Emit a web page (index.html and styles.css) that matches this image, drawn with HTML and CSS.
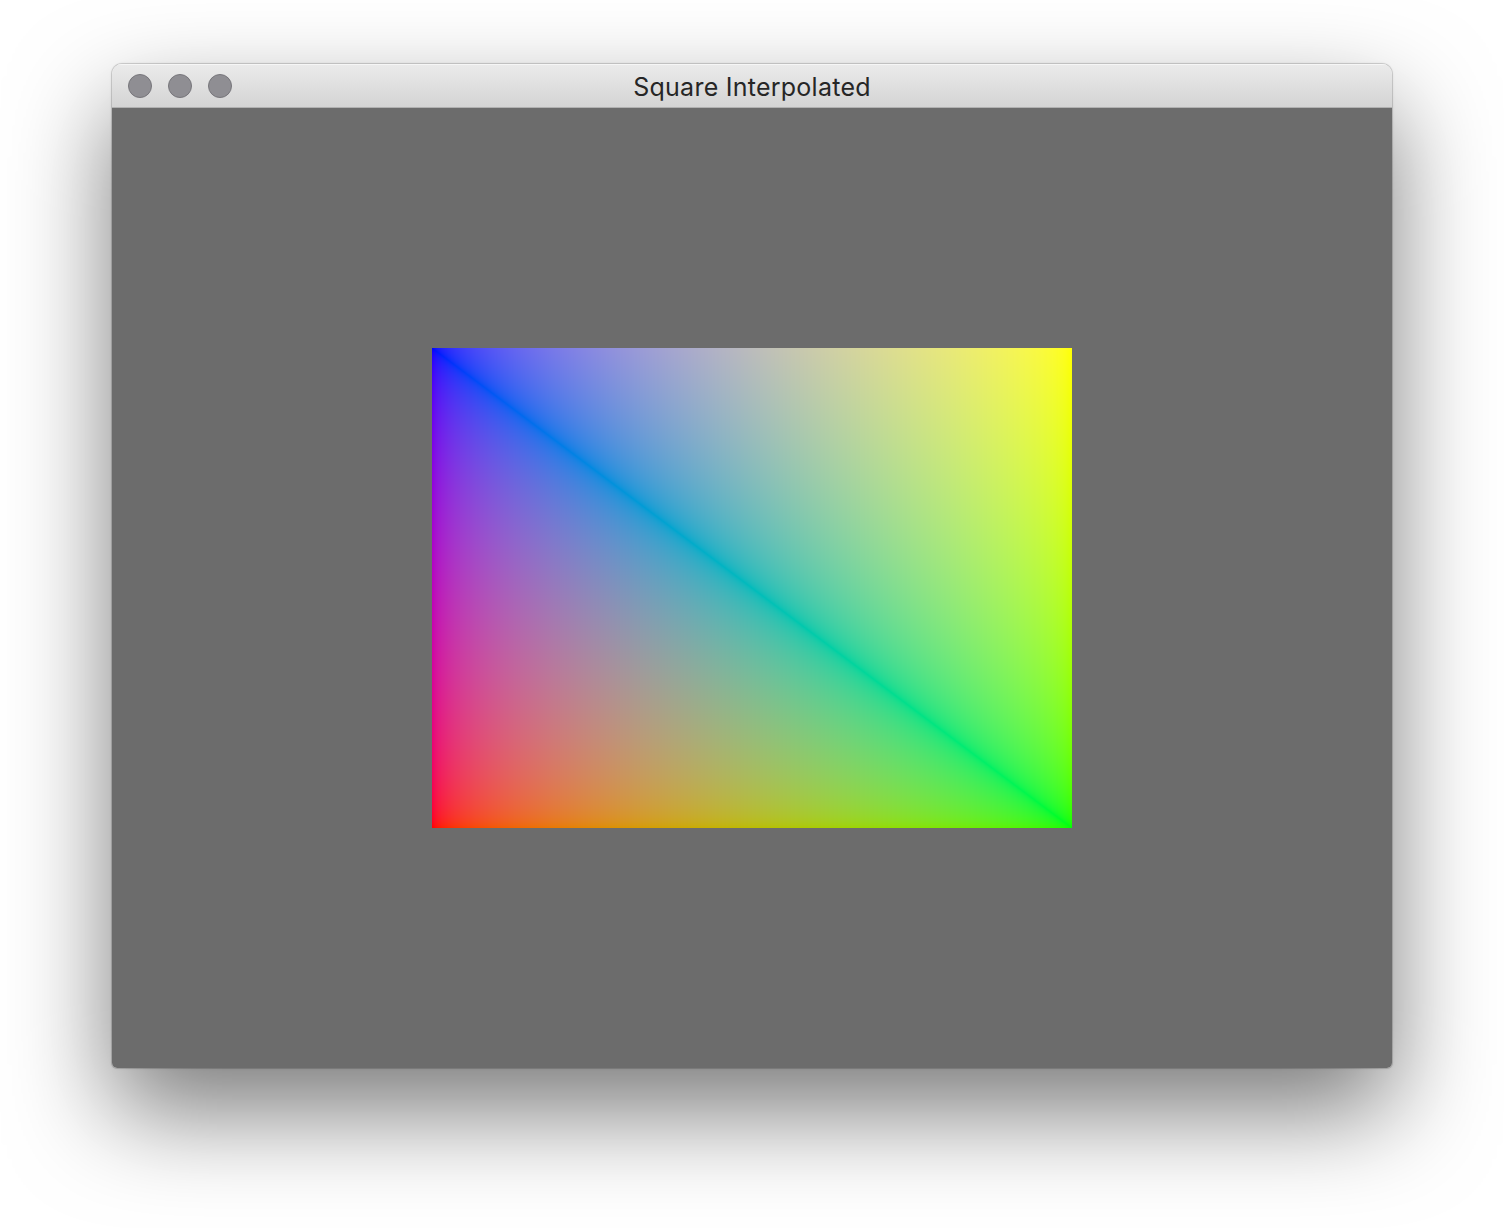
FILE: index.html
```html
<!DOCTYPE html>
<html>
<head>
<meta charset="utf-8">
<title>Square Interpolated</title>
<link rel="stylesheet" href="styles.css">
</head>
<body>
  <div class="window">
    <div class="titlebar">
      <div class="lights">
        <span class="light"></span>
        <span class="light"></span>
        <span class="light"></span>
      </div>
      <div class="title">Square Interpolated</div>
    </div>
    <div class="content">
      <canvas id="view" class="view" width="640" height="480"></canvas>
    </div>
  </div>
  <script src="script.js"></script>
</body>
</html>
```

FILE: styles.css
```css
html, body {
  margin: 0;
  padding: 0;
  background: #ffffff;
}
body {
  width: 1504px;
  height: 1228px;
  overflow: hidden;
  display: flex;
  flex-direction: column;
  align-items: center;
  padding-top: 64px;
  box-sizing: border-box;
  font-family: Inter, "Noto Sans", "Liberation Sans", sans-serif;
}
.window {
  width: 1280px;
  border-radius: 10px 10px 5px 5px;
  overflow: hidden;
  box-shadow: 0 44px 100px rgba(0, 0, 0, 0.52), 0 0 0 1px rgba(0, 0, 0, 0.12), 0 0 3px rgba(0, 0, 0, 0.15);
  display: flex;
  flex-direction: column;
}
.titlebar {
  height: 43px;
  position: relative;
  background: linear-gradient(#ebebeb, #d4d4d4);
  border-bottom: 1px solid #b1b1b1;
  box-shadow: inset 0 1px 0 #f6f6f6;
  display: flex;
  align-items: center;
  justify-content: center;
}
.lights {
  position: absolute;
  left: 16px;
  top: 10px;
  display: flex;
  gap: 16px;
}
.light {
  width: 22px;
  height: 22px;
  border-radius: 50%;
  background: #8f8e93;
  border: 1px solid #77767b;
}
.title {
  font-size: 25px;
  color: #262626;
  letter-spacing: 0.25px;
  padding-top: 2px;
}
.content {
  height: 960px;
  background: #6c6c6c;
  display: flex;
  align-items: center;
  justify-content: center;
}
.view {
  display: block;
  width: 640px;
  height: 480px;
}
```

FILE: script.js
```js
(function () {
  var c = document.getElementById('view');
  var ctx = c.getContext('2d');
  var w = c.width, h = c.height;
  var img = ctx.createImageData(w, h);
  var d = img.data;
  function enc(v) {
    if (v <= 0) return 0;
    if (v >= 1) return 255;
    var s = v <= 0.0031308 ? 12.92 * v : 1.055 * Math.pow(v, 1 / 2.4) - 0.055;
    return Math.round(s * 255);
  }
  for (var y = 0; y < h; y++) {
    var v = (y + 0.5) / h;
    for (var x = 0; x < w; x++) {
      var u = (x + 0.5) / w;
      var r, g, b;
      if (v <= u) {
        r = u - v; g = u; b = 1 - u;
      } else {
        r = v - u; g = u; b = 1 - v;
      }
      var i = (y * w + x) * 4;
      d[i] = enc(r);
      d[i + 1] = enc(g);
      d[i + 2] = enc(b);
      d[i + 3] = 255;
    }
  }
  ctx.putImageData(img, 0, 0);
})();
```
